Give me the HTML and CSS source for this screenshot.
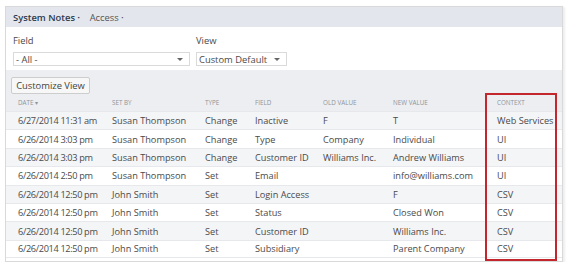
FILE: index.html
```html
<!DOCTYPE html>
<html>
<head>
<meta charset="utf-8">
<link rel="stylesheet" href="styles.css">
</head>
<body>
<div class="panel">
  <div class="tabs">
    <span class="tab active">System Notes <span class="dot">•</span></span>
    <span class="tab">Access <span class="dot">•</span></span>
  </div>
  <div class="filters">
    <div class="filter filter-field">
      <div class="flabel">Field</div>
      <div class="select sel-field"><span>- All -</span><span class="arrow"></span></div>
    </div>
    <div class="filter filter-view">
      <div class="flabel">View</div>
      <div class="select sel-view"><span>Custom Default</span><span class="arrow"></span></div>
    </div>
  </div>
  <div class="band">
    <div class="btn">Customize View</div>
    <div class="row head">
      <div class="c">Date <span class="sort">▾</span></div>
      <div class="c">Set By</div>
      <div class="c">Type</div>
      <div class="c">Field</div>
      <div class="c">Old Value</div>
      <div class="c">New Value</div>
      <div class="c">Context</div>
    </div>
  </div>
  <div class="rows">
    <div class="row odd"><div class="c">6/27/2014 11:31 am</div><div class="c">Susan Thompson</div><div class="c">Change</div><div class="c">Inactive</div><div class="c">F</div><div class="c">T</div><div class="c">Web Services</div></div>
    <div class="row"><div class="c">6/26/2014 3:03 pm</div><div class="c">Susan Thompson</div><div class="c">Change</div><div class="c">Type</div><div class="c">Company</div><div class="c">Individual</div><div class="c">UI</div></div>
    <div class="row odd"><div class="c">6/26/2014 3:03 pm</div><div class="c">Susan Thompson</div><div class="c">Change</div><div class="c">Customer ID</div><div class="c">Williams Inc.</div><div class="c">Andrew Williams</div><div class="c">UI</div></div>
    <div class="row"><div class="c">6/26/2014 2:50 pm</div><div class="c">Susan Thompson</div><div class="c">Set</div><div class="c">Email</div><div class="c"></div><div class="c">info@williams.com</div><div class="c">UI</div></div>
    <div class="row odd"><div class="c">6/26/2014 12:50 pm</div><div class="c">John Smith</div><div class="c">Set</div><div class="c">Login Access</div><div class="c"></div><div class="c">F</div><div class="c">CSV</div></div>
    <div class="row"><div class="c">6/26/2014 12:50 pm</div><div class="c">John Smith</div><div class="c">Set</div><div class="c">Status</div><div class="c"></div><div class="c">Closed Won</div><div class="c">CSV</div></div>
    <div class="row odd"><div class="c">6/26/2014 12:50 pm</div><div class="c">John Smith</div><div class="c">Set</div><div class="c">Customer ID</div><div class="c"></div><div class="c">Williams Inc.</div><div class="c">CSV</div></div>
    <div class="row"><div class="c">6/26/2014 12:50 pm</div><div class="c">John Smith</div><div class="c">Set</div><div class="c">Subsidiary</div><div class="c"></div><div class="c">Parent Company</div><div class="c">CSV</div></div>
  </div>
  <div class="highlight"></div>
</div>
</body>
</html>
```
FILE: styles.css
```css
* { box-sizing: border-box; }
html, body { margin: 0; padding: 0; background: #fff; }
body {
  font-family: "Open Sans", "Liberation Sans", sans-serif;
  color: #4a4a4a;
  padding: 6px 0 0 5px;
}
.panel {
  position: relative;
  width: 558px;
  height: 256px;
  border: 1px solid #d9d9d9;
  box-shadow: 2px 1px 2px rgba(0,0,0,0.07);
  background: #fff;
}
.tabs {
  height: 20px;
  background: #e3e7ed;
  display: flex;
  align-items: center;
  padding-left: 7px;
  gap: 10px;
  font-size: 9.4px;
}
.tab { color: #555; }
.tab.active { font-weight: 600; color: #2e3b4e; }
.dot { font-size: 6px; vertical-align: 1px; }
.filters {
  display: flex;
  padding: 7px 0 0 7px;
  gap: 6px;
  height: 43px;
}
.flabel { font-size: 9.4px; color: #4a4a4a; height: 18px; line-height: 14px; }
.select {
  height: 14px;
  border: 1px solid #dadada;
  display: flex;
  align-items: center;
  justify-content: space-between;
  padding: 0 6px 0 2px;
  font-size: 9.4px;
  color: #4a4a4a;
}
.sel-field { width: 177px; }
.sel-view { width: 91px; }
.arrow {
  width: 0; height: 0;
  border-left: 3.5px solid transparent;
  border-right: 3.5px solid transparent;
  border-top: 3.5px solid #666;
}
.band {
  background: #eceef2;
  padding: 7px 0 0 0;
  height: 41px;
}
.btn {
  margin-left: 5px;
  width: 79px;
  height: 17px;
  border: 1px solid #cdcdcd;
  border-radius: 2px;
  background: #f7f7f7;
  font-size: 9.4px;
  line-height: 15px;
  text-align: center;
  color: #444;
}
.row {
  display: grid;
  grid-template-columns: 100px 93px 50px 68px 70px 104px 71px;
  height: 18.4px;
  align-items: center;
  font-size: 9.2px;
  border-top: 1px solid #e6e8eb;
}
.row .c { padding-left: 6px; white-space: nowrap; }
.row .c:first-child { padding-left: 12px; letter-spacing: -0.35px; }
.row.head {
  border-top: none;
  height: 16px;
  font-size: 6.3px;
  text-transform: uppercase;
  color: #8f949a;
}
.row.head .c:first-child { letter-spacing: 0; }
.sort { font-size: 6px; }
.row.odd { background: #f4f5f7; }
.rows .row:last-child { border-bottom: 1px solid #e6e8eb; }
.highlight {
  position: absolute;
  left: 479px;
  top: 86px;
  width: 72px;
  height: 168px;
  border: 2px solid #c3262d;
}
```
